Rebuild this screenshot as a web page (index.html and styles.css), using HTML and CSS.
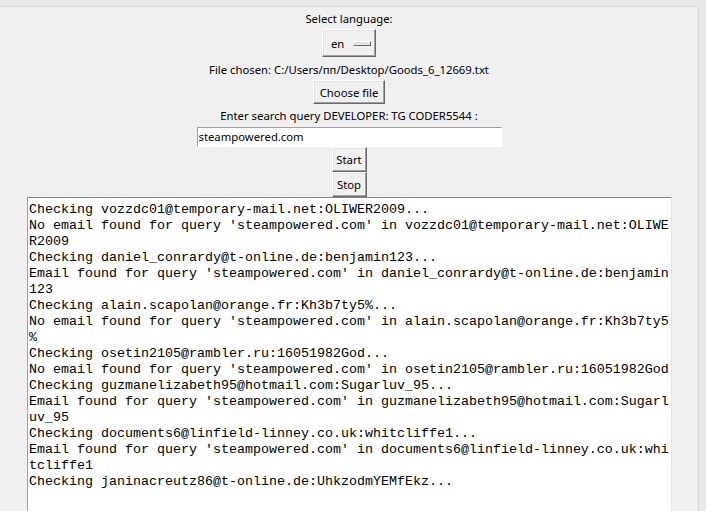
FILE: index.html
```
<!DOCTYPE html>
<html lang="en">
<head>
  <meta charset="UTF-8" />
  <meta name="viewport" content="width=device-width, initial-scale=1.0" />
  <title>Email Search</title>
  <link rel="stylesheet" href="styles.css">
</head>
<body>
  <div class="window">
    <div class="label label-first">Select language:</div>
    <div class="menubutton">
      <span>en</span>
      <span class="indicator"></span>
    </div>
    <div class="label label-file">File chosen: C:/Users/пп/Desktop/Goods_6_12669.txt</div>
    <div class="button button-choose">Choose file</div>
    <div class="label label-query">Enter search query DEVELOPER: TG CODER5544 :</div>
    <div class="entry">steampowered.com</div>
    <div class="button button-small">Start</div>
    <div class="button button-small">Stop</div>
    <pre class="log">Checking vozzdc01@temporary-mail.net:OLIWER2009...
No email found for query 'steampowered.com' in vozzdc01@temporary-mail.net:OLIWE
R2009
Checking daniel_conrardy@t-online.de:benjamin123...
Email found for query 'steampowered.com' in daniel_conrardy@t-online.de:benjamin
123
Checking alain.scapolan@orange.fr:Kh3b7ty5%...
No email found for query 'steampowered.com' in alain.scapolan@orange.fr:Kh3b7ty5
%
Checking osetin2105@rambler.ru:16051982God...
No email found for query 'steampowered.com' in osetin2105@rambler.ru:16051982God
Checking guzmanelizabeth95@hotmail.com:Sugarluv_95...
Email found for query 'steampowered.com' in guzmanelizabeth95@hotmail.com:Sugarl
uv_95
Checking documents6@linfield-linney.co.uk:whitcliffe1...
Email found for query 'steampowered.com' in documents6@linfield-linney.co.uk:whi
tcliffe1
Checking janinacreutz86@t-online.de:UhkzodmYEMfEkz...</pre>
  </div>
</body>
</html>
```

FILE: styles.css
```
html, body {
  margin: 0;
  height: 100%;
  overflow: hidden;
}
body {
  background-color: #e9e9e9;
  font-family: "Noto Sans", "Liberation Sans", sans-serif;
  font-size: 11.3px;
  color: #000;
}
.window {
  margin-top: 6px;
  width: 699px;
  height: 505px;
  box-sizing: border-box;
  background-color: #f0f0f0;
  border-top: 1px solid #dadada;
  border-right: 1px solid #dadada;
  display: flex;
  flex-direction: column;
  align-items: center;
}
.label {
  height: 20px;
  line-height: 20px;
  white-space: nowrap;
}
.label-first {
  margin-top: 2px;
}
.label-file {
  margin-top: 3px;
}
.label-query {
  margin-top: 2px;
  margin-bottom: 1px;
}
/* raised tk style widgets */
.button, .menubutton {
  box-sizing: border-box;
  background-color: #f0f0f0;
  border: 1px solid;
  border-color: #fff #696969 #696969 #fff;
  box-shadow: inset -1px -1px 0 #a0a0a0, inset 1px 1px 0 #e3e3e3;
  text-align: center;
}
.menubutton {
  width: 54px;
  height: 28px;
  display: flex;
  align-items: center;
  padding-left: 8px;
  gap: 9px;
}
.indicator {
  width: 18px;
  height: 5px;
  box-sizing: border-box;
  border: 1px solid;
  border-color: #fff #696969 #696969 #fff;
  background-color: #e3e3e3;
}
.button {
  height: 24px;
  line-height: 23px;
}
.button-choose {
  width: 72px;
}
.button-small {
  width: 35px;
  height: 25px;
  line-height: 24px;
}
.entry {
  box-sizing: border-box;
  width: 305px;
  height: 20px;
  line-height: 18px;
  background-color: #fff;
  border: 1px solid;
  border-color: #a0a0a0 #fff #fff #a0a0a0;
  padding-left: 1px;
}
.log {
  box-sizing: border-box;
  align-self: flex-start;
  margin: 0 0 0 27px;
  width: 645px;
  flex: 1;
  background-color: #fff;
  border: 1px solid;
  border-color: #828790 #e3e3e3 #fff #a0a0a0;
  padding: 4px 1px;
  font-family: "Liberation Mono", monospace;
  font-size: 13.33px;
  line-height: 16px;
  white-space: pre;
  overflow: hidden;
}
```
